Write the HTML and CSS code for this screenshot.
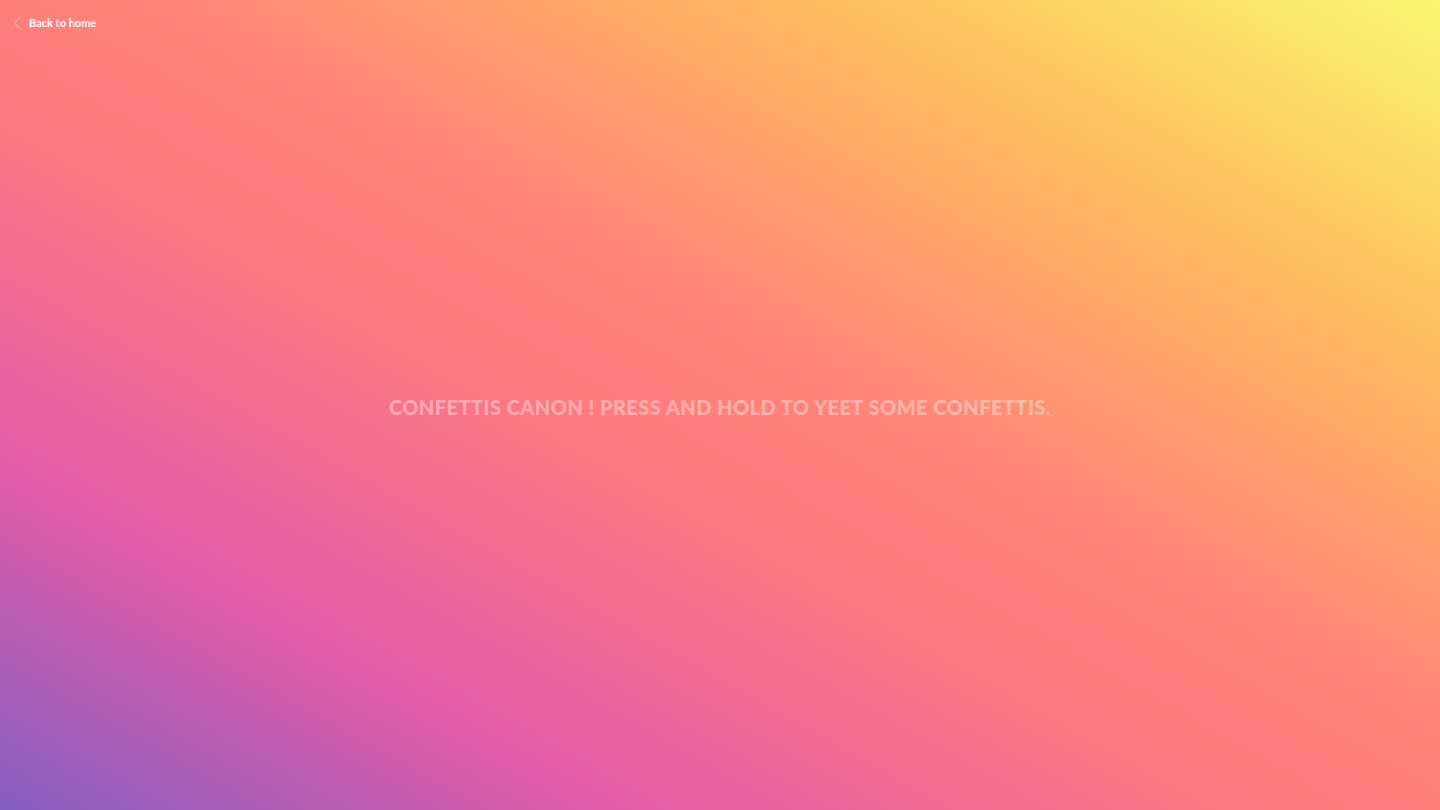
FILE: index.html
```html
<!DOCTYPE html>
<html lang="en">
<head>
<meta charset="utf-8">
<title>Confettis canon</title>
<link rel="stylesheet" href="styles.css">
</head>
<body>
<main class="page">
  <nav class="topbar">
    <a class="back" href="#">
      <svg class="chev" width="8" height="12" viewBox="0 0 8 12"><path d="M6.5 0.8 L1.5 6 L6.5 11.2" fill="none" stroke="#fff" stroke-opacity="0.7" stroke-width="1"/></svg>
      <span>Back to home</span>
    </a>
  </nav>
  <section class="center">
    <h1 class="title">Confettis canon ! Press and hold to yeet some confettis.</h1>
  </section>
</main>
</body>
</html>
```
FILE: styles.css
```css
html, body {
  margin: 0;
  padding: 0;
  height: 100%;
}
body {
  font-family: "Lato", "Open Sans", sans-serif;
  overflow: hidden;
}
.page {
  width: 100vw;
  height: 100vh;
  display: flex;
  flex-direction: column;
  background: linear-gradient(to top right, #845ec2 0%, #e15ca8 21%, #ff7b7e 45%, #ff8479 55%, #ffbb5f 78%, #f9f871 100%);
}
.topbar {
  display: flex;
  padding: 15px 0 0 13px;
  height: 30px;
  box-sizing: border-box;
}
.back {
  display: flex;
  align-items: center;
  gap: 8px;
  color: #fff;
  text-decoration: none;
  font-size: 11px;
  font-weight: 700;
}
.center {
  flex: 1;
  display: flex;
  align-items: center;
  justify-content: center;
  padding-bottom: 26px;
}
.title {
  margin: 0;
  text-transform: uppercase;
  font-family: "Lato", sans-serif;
  font-weight: 900;
  font-size: 20px;
  color: rgba(255, 255, 255, 0.4);
  letter-spacing: 0.45px;
}
```
